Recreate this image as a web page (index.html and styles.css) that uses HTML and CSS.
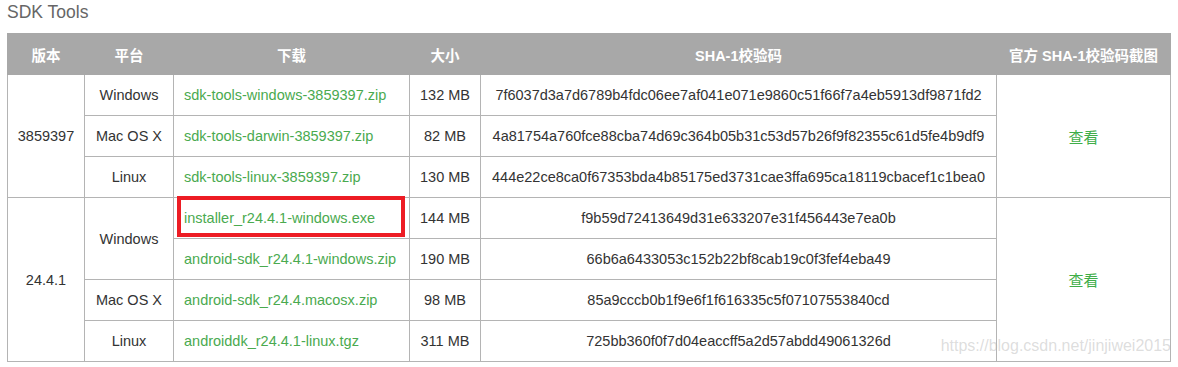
FILE: index.html
```html
<!DOCTYPE html>
<html lang="zh">
<head>
<meta charset="utf-8">
<title>SDK Tools</title>
<link rel="stylesheet" href="styles.css">
</head>
<body>
<div class="page">
  <h2 class="title">SDK Tools</h2>
  <div class="table-wrap">
    <table class="sdk">
      <colgroup>
        <col class="c-ver"><col class="c-plat"><col class="c-dl"><col class="c-size"><col class="c-sha"><col class="c-shot">
      </colgroup>
      <thead>
        <tr><th>版本</th><th>平台</th><th>下载</th><th>大小</th><th>SHA-1校验码</th><th>官方 SHA-1校验码截图</th></tr>
      </thead>
      <tbody>
        <tr>
          <td rowspan="3">3859397</td>
          <td>Windows</td>
          <td class="dl">sdk-tools-windows-3859397.zip</td>
          <td>132 MB</td>
          <td>7f6037d3a7d6789b4fdc06ee7af041e071e9860c51f66f7a4eb5913df9871fd2</td>
          <td rowspan="3" class="view">查看</td>
        </tr>
        <tr>
          <td>Mac OS X</td>
          <td class="dl">sdk-tools-darwin-3859397.zip</td>
          <td>82 MB</td>
          <td>4a81754a760fce88cba74d69c364b05b31c53d57b26f9f82355c61d5fe4b9df9</td>
        </tr>
        <tr>
          <td>Linux</td>
          <td class="dl">sdk-tools-linux-3859397.zip</td>
          <td>130 MB</td>
          <td>444e22ce8ca0f67353bda4b85175ed3731cae3ffa695ca18119cbacef1c1bea0</td>
        </tr>
        <tr>
          <td rowspan="4">24.4.1</td>
          <td rowspan="2">Windows</td>
          <td class="dl marked">installer_r24.4.1-windows.exe<span class="hl"></span></td>
          <td>144 MB</td>
          <td>f9b59d72413649d31e633207e31f456443e7ea0b</td>
          <td rowspan="4" class="view">查看</td>
        </tr>
        <tr>
          <td class="dl">android-sdk_r24.4.1-windows.zip</td>
          <td>190 MB</td>
          <td>66b6a6433053c152b22bf8cab19c0f3fef4eba49</td>
        </tr>
        <tr>
          <td>Mac OS X</td>
          <td class="dl">android-sdk_r24.4.macosx.zip</td>
          <td>98 MB</td>
          <td>85a9cccb0b1f9e6f1f616335c5f07107553840cd</td>
        </tr>
        <tr>
          <td>Linux</td>
          <td class="dl">androiddk_r24.4.1-linux.tgz</td>
          <td>311 MB</td>
          <td>725bb360f0f7d04eaccff5a2d57abdd49061326d</td>
        </tr>
      </tbody>
    </table>
    <span class="watermark">https://blog.csdn.net/jinjiwei2015</span>
  </div>
</div>
</body>
</html>
```

FILE: styles.css
```css
html, body {
  margin: 0;
  padding: 0;
  background: #fff;
}

.page {
  padding: 0 9px 0 7px;
  font-family: "Liberation Sans", Arial, "Noto Sans CJK SC", sans-serif;
  color: #333;
}

.title {
  margin: 0;
  height: 33px;
  padding-top: 2px;
  box-sizing: border-box;
  font-size: 17.5px;
  font-weight: normal;
  line-height: 20px;
  color: #666;
}

.table-wrap {
  position: relative;
  width: 1163px;
}

.sdk {
  width: 1163px;
  border-collapse: collapse;
  table-layout: fixed;
  font-size: 14.5px;
}

.c-ver { width: 77px; }
.c-plat { width: 89px; }
.c-dl { width: 236px; }
.c-size { width: 71px; }
.c-sha { width: 516px; }
.c-shot { width: 174px; }

.sdk th {
  background: #a8a8a8;
  color: #fff;
  font-weight: bold;
  font-size: 14.5px;
  height: 40px;
  padding: 0;
  border: 1px solid #a8a8a8;
  font-family: "Liberation Sans", Arial, "Noto Sans CJK SC", sans-serif;
  text-align: center;
  white-space: nowrap;
}

.sdk td {
  height: 40px;
  padding: 0;
  border: 1px solid #b4b4b4;
  text-align: center;
  vertical-align: middle;
  white-space: nowrap;
}

.sdk td.dl {
  text-align: left;
  padding-left: 10px;
  color: #4aaa4f;
}

.sdk td.view {
  color: #3fae49;
  font-family: "Noto Sans CJK SC", sans-serif;
  font-size: 15px;
}

.sdk td.marked {
  position: relative;
}

.hl {
  position: absolute;
  left: 3px;
  top: -2px;
  width: 228px;
  height: 41px;
  box-sizing: border-box;
  border: 4px solid #ed1c24;
}

.watermark {
  position: absolute;
  right: -1px;
  bottom: 7px;
  font-size: 16px;
  color: rgba(180, 180, 180, 0.45);
  font-family: "Liberation Sans", Arial, sans-serif;
  pointer-events: none;
}
```
